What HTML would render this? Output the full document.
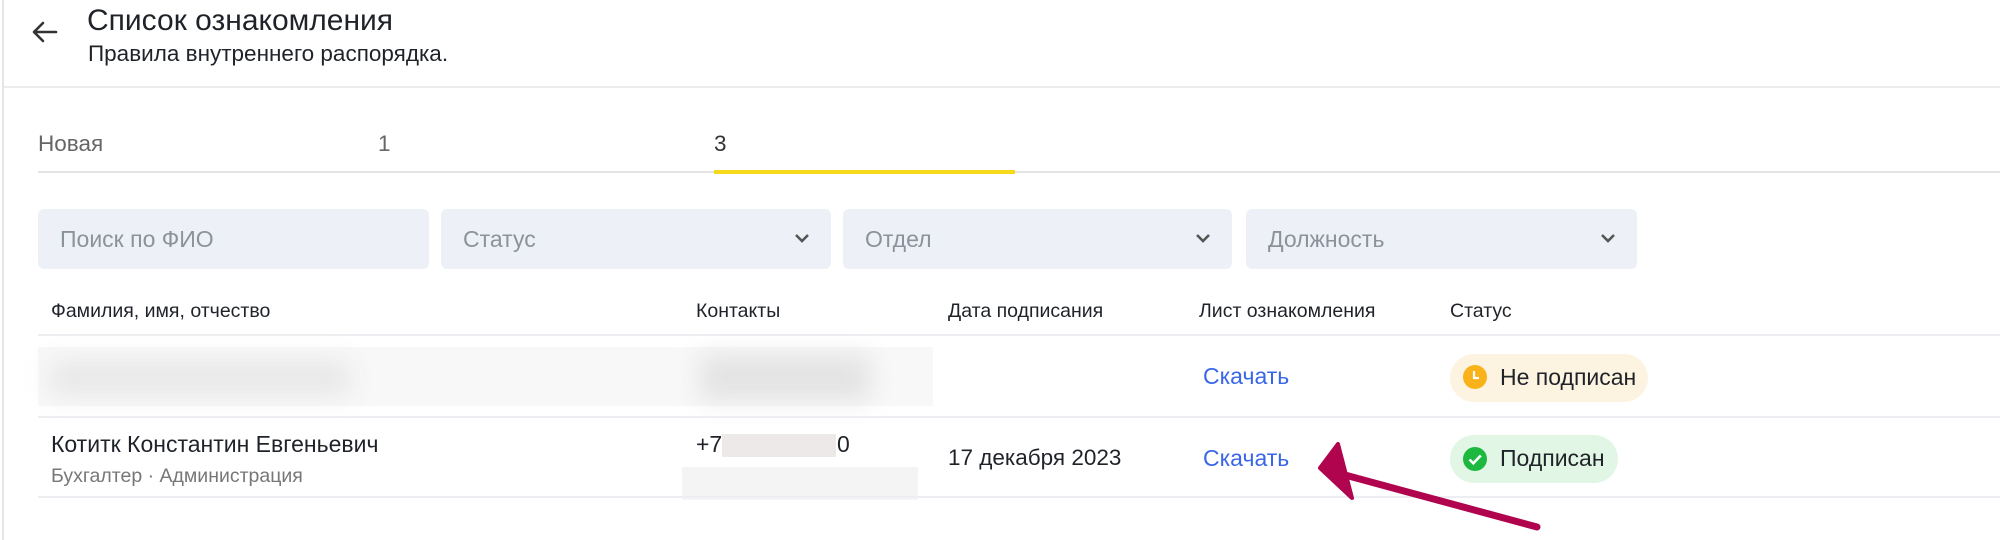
<!DOCTYPE html>
<html><head><meta charset="utf-8">
<style>
*{margin:0;padding:0;box-sizing:border-box}
body{width:2000px;height:540px;background:#fff;font-family:"Liberation Sans",sans-serif;color:#1f2329;position:relative;overflow:hidden}
.a{position:absolute;white-space:nowrap}
.f{position:absolute;top:209px;height:60px;background:#edf1f7;border-radius:6px}
.f span{position:absolute;left:22px;top:17px;font-size:23px;color:#8c929c}
.f svg{position:absolute;right:20px;top:22px}
.h{position:absolute;top:300px;font-size:19.5px;color:#1f2329}
.line{position:absolute;left:38px;right:0;height:2px;background:#eceef1}
.dl{color:#3a66e8;font-size:23px}
</style></head><body>
<div class="a" style="left:2px;top:0;width:2px;height:540px;background:#e6e6e6"></div>
<svg class="a" style="left:31px;top:20px" width="28" height="24" viewBox="0 0 28 24"><path d="M25 12H4M12 3L3 12l9 9" fill="none" stroke="#333" stroke-width="2.6" stroke-linecap="round" stroke-linejoin="round"/></svg>
<div class="a" style="left:87px;top:4px;font-size:30px;color:#1f2329">Список ознакомления</div>
<div class="a" style="left:88px;top:41px;font-size:22.5px;color:#1f2329">Правила внутреннего распорядка.</div>
<div class="a" style="left:4px;right:0;top:86px;height:2px;background:#ececec"></div>

<div class="a" style="left:38px;top:131px;font-size:22.5px;color:#666">Новая</div>
<div class="a" style="left:378px;top:131px;font-size:22.5px;color:#666">1</div>
<div class="a" style="left:714px;top:131px;font-size:22.5px;color:#333">3</div>
<div class="a" style="left:38px;right:0;top:171px;height:2px;background:#e4e4e4"></div>
<div class="a" style="left:714px;width:301px;top:170px;height:4px;background:#f7d91c"></div>

<div class="f" style="left:38px;width:391px"><span>Поиск по ФИО</span></div>
<div class="f" style="left:441px;width:390px"><span>Статус</span><svg width="18" height="14" viewBox="0 0 18 14"><path d="M3 4l6 6 6-6" fill="none" stroke="#555" stroke-width="2.6"/></svg></div>
<div class="f" style="left:843px;width:389px"><span>Отдел</span><svg width="18" height="14" viewBox="0 0 18 14"><path d="M3 4l6 6 6-6" fill="none" stroke="#555" stroke-width="2.6"/></svg></div>
<div class="f" style="left:1246px;width:391px"><span>Должность</span><svg width="18" height="14" viewBox="0 0 18 14"><path d="M3 4l6 6 6-6" fill="none" stroke="#555" stroke-width="2.6"/></svg></div>

<div class="h" style="left:51px">Фамилия, имя, отчество</div>
<div class="h" style="left:696px">Контакты</div>
<div class="h" style="left:948px">Дата подписания</div>
<div class="h" style="left:1199px">Лист ознакомления</div>
<div class="h" style="left:1450px">Статус</div>
<div class="line" style="top:334px"></div>

<div class="a" style="left:38px;top:347px;width:895px;height:59px;background:#f8f8f8"></div>
<div class="a" style="left:50px;top:360px;width:300px;height:36px;background:#e8e8e8;filter:blur(12px)"></div>
<div class="a" style="left:700px;top:355px;width:170px;height:45px;background:#e3e3e3;filter:blur(12px)"></div>
<div class="a dl" style="left:1203px;top:363px">Скачать</div>
<div class="a" style="left:1450px;top:354px;width:198px;height:48px;border-radius:24px;background:#fdf3e1"></div>
<svg class="a" style="left:1463px;top:365px" width="24" height="24" viewBox="0 0 24 24"><circle cx="12" cy="12" r="12" fill="#f9b219"/><path d="M11 6v7h5" fill="none" stroke="#fff" stroke-width="2.2"/></svg>
<div class="a" style="left:1500px;top:364px;font-size:23px">Не подписан</div>
<div class="line" style="top:416px"></div>

<div class="a" style="left:51px;top:431px;font-size:23px">Котитк Константин Евгеньевич</div>
<div class="a" style="left:51px;top:465px;font-size:19.5px;color:#777">Бухгалтер · Администрация</div>
<div class="a" style="left:696px;top:431px;font-size:23px">+79</div>
<div class="a" style="left:722px;top:434px;width:114px;height:23px;background:#ece9e8"></div>
<div class="a" style="left:837px;top:431px;font-size:23px">0</div>
<div class="a" style="left:682px;top:467px;width:236px;height:33px;background:#f4f4f4"></div>
<div class="a" style="left:948px;top:445px;font-size:22.5px">17 декабря 2023</div>
<div class="a dl" style="left:1203px;top:445px">Скачать</div>
<div class="a" style="left:1450px;top:435px;width:168px;height:48px;border-radius:24px;background:#e1f6e4"></div>
<svg class="a" style="left:1463px;top:447px" width="24" height="24" viewBox="0 0 24 24"><circle cx="12" cy="12" r="12" fill="#1db83f"/><path d="M6.5 12.5l3.8 3.8 7.5-7.8" fill="none" stroke="#fff" stroke-width="2.6"/></svg>
<div class="a" style="left:1500px;top:445px;font-size:23px">Подписан</div>
<div class="line" style="top:496px"></div>

<svg class="a" style="left:0;top:0" width="2000" height="540" viewBox="0 0 2000 540"><path d="M1537 527L1345 475" stroke="#b0044e" stroke-width="7" stroke-linecap="round"/><path d="M1320 468L1338 444L1352 498Z" fill="#b0044e" stroke="#b0044e" stroke-width="4" stroke-linejoin="round"/></svg>
</body></html>
